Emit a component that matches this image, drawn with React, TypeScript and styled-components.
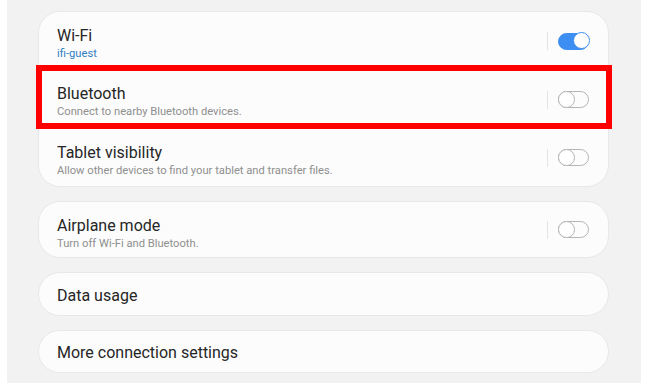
import React from 'react';
import styled, { createGlobalStyle } from 'styled-components';

const GlobalStyle = createGlobalStyle`
  html, body {
    margin: 0;
    padding: 0;
    background: #ffffff;
    font-family: Roboto, "Noto Sans", Arial, sans-serif;
  }
  * { box-sizing: border-box; }
`;

const Panel = styled.div`
  margin-left: 7px;
  width: 634px;
  height: 383px;
  background: #f2f2f2;
  padding: 11px 32px 0 31px;
  display: flex;
  flex-direction: column;
  gap: 14px;
  overflow: hidden;
`;

const Card = styled.div`
  background: #fcfcfc;
  border: 1px solid #e8e8e8;
  border-radius: 22px;
  display: flex;
  flex-direction: column;
`;

const Row = styled.div<{ $height: number }>`
  position: relative;
  height: ${p => p.$height}px;
  display: flex;
  align-items: center;
  padding: 0 19px 0 18px;
`;

const Texts = styled.div<{ $twoLine: boolean }>`
  flex: 1;
  display: flex;
  flex-direction: column;
  align-self: ${p => (p.$twoLine ? 'flex-start' : 'center')};
  padding-top: ${p => (p.$twoLine ? '15px' : '3px')};
`;

const Title = styled.div`
  font-size: 16px;
  line-height: 18px;
  color: #262626;
`;

const Subtitle = styled.div<{ $accent?: boolean }>`
  font-size: 11.2px;
  line-height: 14px;
  margin-top: 2px;
  color: ${p => (p.$accent ? '#2f7fc4' : '#8f8f8f')};
`;

const Control = styled.div`
  display: flex;
  align-items: center;
`;

const Divider = styled.div`
  width: 1px;
  height: 18px;
  background: #e4e4e4;
  margin-right: 10px;
`;

const Track = styled.div<{ $on: boolean }>`
  position: relative;
  width: 31px;
  height: 17px;
  border-radius: 9px;
  background: ${p => (p.$on ? '#3d8ef2' : 'transparent')};
  border: 1.5px solid ${p => (p.$on ? '#3d8ef2' : '#b4b4b4')};
`;

const Knob = styled.div<{ $on: boolean }>`
  position: absolute;
  top: -1.5px;
  ${p => (p.$on ? 'right: -1.5px;' : 'left: -1.5px;')}
  width: 17px;
  height: 17px;
  border-radius: 50%;
  background: #ffffff;
  border: 1.5px solid ${p => (p.$on ? '#3d8ef2' : '#b4b4b4')};
`;

const Highlight = styled.div`
  position: absolute;
  left: -3px;
  right: -4px;
  top: -5px;
  bottom: 0;
  border: 6px solid #ff0000;
  pointer-events: none;
`;

const Toggle = ({ on }: { on: boolean }) => (
  <Control>
    <Divider />
    <Track $on={on}>
      <Knob $on={on} />
    </Track>
  </Control>
);

interface SettingProps {
  title: string;
  subtitle?: string;
  accent?: boolean;
  toggle?: boolean;
  on?: boolean;
  height: number;
  highlighted?: boolean;
}

const Setting = ({ title, subtitle, accent, toggle, on, height, highlighted }: SettingProps) => (
  <Row $height={height}>
    <Texts $twoLine={!!subtitle}>
      <Title>{title}</Title>
      {subtitle && <Subtitle $accent={accent}>{subtitle}</Subtitle>}
    </Texts>
    {toggle && <Toggle on={!!on} />}
    {highlighted && <Highlight />}
  </Row>
);

export default function App() {
  return (
    <>
      <GlobalStyle />
      <Panel>
        <Card>
          <Setting title="Wi-Fi" subtitle="ifi-guest" accent toggle on height={58} />
          <Setting title="Bluetooth" subtitle="Connect to nearby Bluetooth devices." toggle height={59} highlighted />
          <Setting title="Tablet visibility" subtitle="Allow other devices to find your tablet and transfer files." toggle height={57} />
        </Card>
        <Card>
          <Setting title="Airplane mode" subtitle="Turn off Wi-Fi and Bluetooth." toggle height={55} />
        </Card>
        <Card>
          <Setting title="Data usage" height={42} />
        </Card>
        <Card>
          <Setting title="More connection settings" height={41} />
        </Card>
      </Panel>
    </>
  );
}
